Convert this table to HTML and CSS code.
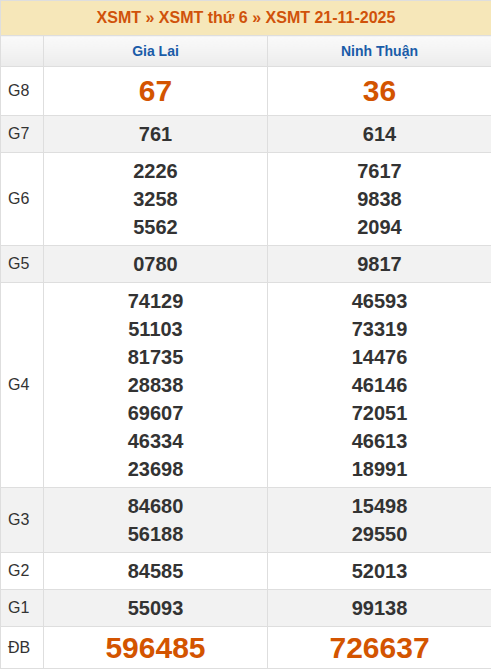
FILE: index.html
```html
<!DOCTYPE html>
<html>
<head>
<meta charset="utf-8">
<link rel="stylesheet" href="styles.css">
</head>
<body>
<table class="kq">
  <colgroup><col class="c-lbl"><col class="c-prov"><col class="c-prov"></colgroup>
  <thead>
    <tr><th colspan="3" class="title"><a>XSMT</a> » <a>XSMT thứ 6</a> » <a>XSMT 21-11-2025</a></th></tr>
    <tr class="prov"><th></th><th>Gia Lai</th><th>Ninh Thuận</th></tr>
  </thead>
  <tbody>
    <tr class="g8"><td class="lbl">G8</td><td class="big">67</td><td class="big">36</td></tr>
    <tr class="alt"><td class="lbl">G7</td><td>761</td><td>614</td></tr>
    <tr><td class="lbl">G6</td><td>2226<br>3258<br>5562</td><td>7617<br>9838<br>2094</td></tr>
    <tr class="alt"><td class="lbl">G5</td><td>0780</td><td>9817</td></tr>
    <tr><td class="lbl">G4</td><td>74129<br>51103<br>81735<br>28838<br>69607<br>46334<br>23698</td><td>46593<br>73319<br>14476<br>46146<br>72051<br>46613<br>18991</td></tr>
    <tr class="alt"><td class="lbl">G3</td><td>84680<br>56188</td><td>15498<br>29550</td></tr>
    <tr><td class="lbl">G2</td><td>84585</td><td>52013</td></tr>
    <tr class="alt"><td class="lbl">G1</td><td>55093</td><td>99138</td></tr>
    <tr class="db"><td class="lbl">ĐB</td><td class="big">596485</td><td class="big">726637</td></tr>
  </tbody>
</table>
</body>
</html>
```
FILE: styles.css
```css
html, body { margin: 0; padding: 0; background: #fff; }
body { font-family: "Liberation Sans", Arial, sans-serif; }
.kq {
  width: 491px;
  border-collapse: collapse;
  table-layout: fixed;
  border: 1px solid #c8c8c8;
}
.c-lbl { width: 43px; }
.c-prov { width: 224px; }
.kq th, .kq td {
  border: 1px solid #dedede;
  text-align: center;
  padding: 0;
}
.title {
  background: #f6e7b9;
  height: 34px;
  font-size: 16px;
  font-weight: bold;
  color: #d0520a;
  border-color: #c8c8c8 #c8c8c8 #dedede;
}
.title a { color: #d0520a; }
.prov th {
  height: 30px;
  background: linear-gradient(#fafafa, #ececec);
  font-size: 14px;
  font-weight: bold;
  color: #1a5ca8;
}
.kq td {
  font-size: 20px;
  font-weight: bold;
  color: #333;
  line-height: 28px;
  padding: 4px 0;
}
.kq td.lbl {
  font-size: 16px;
  font-weight: normal;
  text-align: left;
  padding-left: 7px;
  color: #333;
}
.alt td { background: #f2f2f2; }
.kq td.big {
  font-size: 30px;
  color: #d35400;
}
.g8 td { line-height: 40px; }
.db td { line-height: 33px; }
```
